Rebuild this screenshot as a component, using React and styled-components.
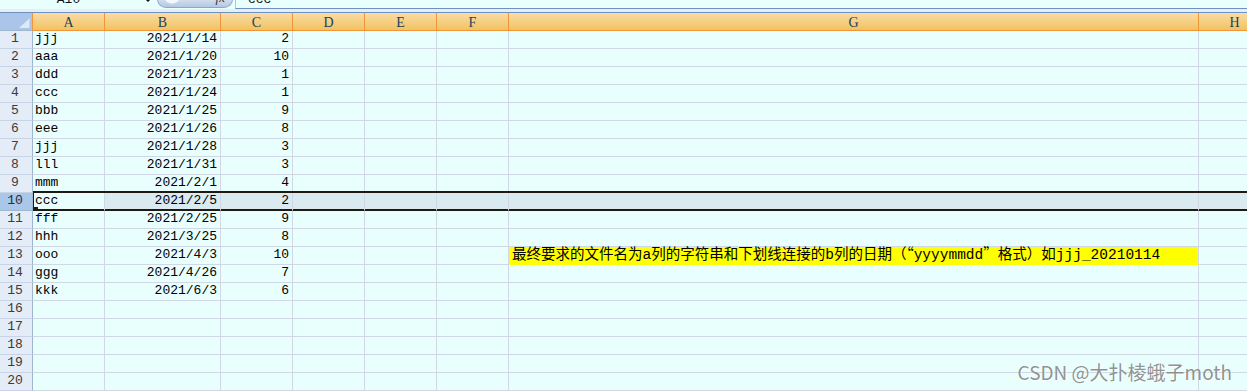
import React from "react";
import styled, { createGlobalStyle } from "styled-components";

const GlobalStyle = createGlobalStyle`
  html, body {
    margin: 0;
    padding: 0;
    background: #e8fffd;
  }
  body {
    font-family: "Liberation Mono", "Noto Sans CJK SC", monospace;
  }
`;

const COLUMNS = ["A", "B", "C", "D", "E", "F", "G", "H"];

const DATA = [
  ["jjj", "2021/1/14", "2"],
  ["aaa", "2021/1/20", "10"],
  ["ddd", "2021/1/23", "1"],
  ["ccc", "2021/1/24", "1"],
  ["bbb", "2021/1/25", "9"],
  ["eee", "2021/1/26", "8"],
  ["jjj", "2021/1/28", "3"],
  ["lll", "2021/1/31", "3"],
  ["mmm", "2021/2/1", "4"],
  ["ccc", "2021/2/5", "2"],
  ["fff", "2021/2/25", "9"],
  ["hhh", "2021/3/25", "8"],
  ["ooo", "2021/4/3", "10"],
  ["ggg", "2021/4/26", "7"],
  ["kkk", "2021/6/3", "6"],
  [],
  [],
  [],
  [],
  [],
];

const ACTIVE_ROW = 10;
const NOTE_ROW = 13;

const Page = styled.div`
  position: relative;
  width: 1247px;
  height: 391px;
  overflow: hidden;
  background: #e8fffd;
`;

const FormulaBar = styled.div`
  display: flex;
  height: 9px;
  overflow: hidden;
`;

const NameBox = styled.div`
  width: 137px;
  margin-top: -8px;
  text-align: center;
  font-size: 13px;
  line-height: 16px;
  color: #111;
`;

const DropArrow = styled.div`
  width: 0;
  height: 0;
  margin: -1px 0 0 8px;
  border-left: 3px solid transparent;
  border-right: 3px solid transparent;
  border-top: 3px solid #111;
`;

const FxButton = styled.div`
  display: flex;
  justify-content: flex-end;
  box-sizing: border-box;
  width: 76px;
  height: 9px;
  margin: -1px 0 0 6px;
  padding-right: 7px;
  border: 1px solid #8ea8cc;
  border-top: none;
  border-radius: 0 0 9px 9px;
  background: radial-gradient(circle at 14px -4px, #f4f7fb 0 8px, transparent 9px),
    linear-gradient(#d3e0f0, #b5c8e2);
`;

const FxLabel = styled.span`
  margin-top: -9px;
  font-family: "Liberation Serif", serif;
  font-style: italic;
  font-size: 13px;
  line-height: 16px;
  color: #333;
`;

const FormulaInput = styled.div`
  flex: 1;
  box-sizing: border-box;
  height: 9px;
  margin-left: 2px;
  padding-left: 12px;
  border-left: 1px solid #b6c4d6;
  border-bottom: 1px solid #6f91bf;
`;

const FormulaText = styled.div`
  margin-top: -8px;
  font-size: 13px;
  line-height: 16px;
  color: #111;
`;

const Strip = styled.div`
  height: 3px;
  background: #e6eef8;
  border-bottom: 1px solid #6f91bf;
`;

const Grid = styled.div`
  display: grid;
  grid-template-columns: 33px 72px 116px 72px 72px 72px 72px 690px 72px;
  grid-auto-rows: 18px;
`;

const Corner = styled.div`
  box-sizing: border-box;
  display: flex;
  justify-content: flex-end;
  align-items: flex-end;
  padding: 0 2px 2px 0;
  background: #aac5e9;
  border-right: 1px solid #f29536;
  border-bottom: 1px solid #9eb6ce;
`;

const ColHeader = styled.div`
  box-sizing: border-box;
  display: flex;
  align-items: center;
  justify-content: center;
  padding-top: 2px;
  background: linear-gradient(#f9dca6, #f1c25f);
  border-right: 1px solid #f29536;
  border-bottom: 1px solid #f29536;
  font-family: "Liberation Serif", serif;
  font-size: 14px;
  color: #243f5c;
`;

const RowHeader = styled.div`
  box-sizing: border-box;
  display: flex;
  align-items: flex-end;
  justify-content: center;
  padding: 0 2px 1px 0;
  background: ${(p) => (p.$active ? "#aac6e8" : "#e4ecf7")};
  border-right: 1px solid #9eb6ce;
  border-bottom: 1px solid ${(p) => (p.$active ? "#9eb6ce" : "#c7d4e6")};
  font-size: 13px;
  line-height: 16px;
  color: ${(p) => (p.$active ? "#1c2f45" : "#3b3b3b")};
`;

const Cell = styled.div`
  position: relative;
  box-sizing: border-box;
  display: flex;
  align-items: flex-end;
  justify-content: ${(p) => (p.$right ? "flex-end" : "flex-start")};
  padding: ${(p) => (p.$right ? "0 3px 1px 0" : "0 0 1px 2px")};
  white-space: nowrap;
  background: ${(p) =>
    p.$note ? "#ffff00" : p.$selected ? "#d9eaf1" : "#e8fffd"};
  border-right: 1px solid #d0d7e5;
  border-bottom: 1px solid
    ${(p) => (p.$active ? "#1f1912" : p.$note ? "#ffff00" : "#d0d7e5")};
  box-shadow: ${(p) =>
    p.$active
      ? `0 -2px 0 #1f1912, inset 0 -1px 0 #1f1912${
          p.$current ? ", inset 1px 0 0 #1f1912" : ""
        }`
      : "none"};
  font-size: 13px;
  line-height: 16px;
  color: #000;
`;

const NoteText = styled.span`
  font-family: "Liberation Mono", "Noto Sans CJK SC", monospace;
  font-size: 14.5px;
  line-height: 16px;
  margin-left: 1px;
`;

// full-width quotes, as the sheet's CJK font draws them
const WideQuote = styled.span`
  font-family: "Noto Sans CJK SC", sans-serif;
`;

const FillHandle = styled.span`
  position: absolute;
  left: 0;
  bottom: -2px;
  width: 5px;
  height: 5px;
  background: #1f1912;
`;

const Watermark = styled.div`
  position: absolute;
  right: 15px;
  bottom: 7px;
  font-family: "Noto Sans CJK SC", "Noto Sans", sans-serif;
  font-size: 19px;
  line-height: 24px;
  color: rgba(128, 128, 128, 0.85);
  text-shadow: 1px 1px 1px rgba(255, 255, 255, 0.9);
  white-space: nowrap;
`;

const CornerMark = () => (
  <svg width="11" height="10" viewBox="0 0 11 10">
    <polygon points="11,0 11,10 0,10" fill="#dfe9f6" />
    <polygon points="11,0 11,10 10,10 10,1" fill="#c4d5ec" />
  </svg>
);

const Note = () => (
  <NoteText>
    最终要求的文件名为a列的字符串和下划线连接的b列的日期（
    <WideQuote>“</WideQuote>yyyymmdd<WideQuote>”</WideQuote>
    格式）如jjj_20210114
  </NoteText>
);

const App = () => {
  return (
    <Page>
      <GlobalStyle />
      <FormulaBar>
        <NameBox>A10</NameBox>
        <DropArrow />
        <FxButton>
          <FxLabel>fx</FxLabel>
        </FxButton>
        <FormulaInput>
          <FormulaText>ccc</FormulaText>
        </FormulaInput>
      </FormulaBar>
      <Strip />
      <Grid>
        <Corner>
          <CornerMark />
        </Corner>
        {COLUMNS.map((c) => (
          <ColHeader key={c}>{c}</ColHeader>
        ))}
        {DATA.map((row, i) => {
          const n = i + 1;
          const active = n === ACTIVE_ROW;
          return (
            <React.Fragment key={n}>
              <RowHeader $active={active}>{n}</RowHeader>
              {COLUMNS.map((c, ci) => {
                const note = n === NOTE_ROW && c === "G";
                return (
                  <Cell
                    key={c}
                    $right={ci === 1 || ci === 2}
                    $active={active}
                    $current={active && ci === 0}
                    $selected={active && ci > 0}
                    $note={note}
                  >
                    {ci < 3 && row[ci]}
                    {note && <Note />}
                    {active && ci === 0 && <FillHandle />}
                  </Cell>
                );
              })}
            </React.Fragment>
          );
        })}
      </Grid>
      <Watermark>CSDN @大扑棱蛾子moth</Watermark>
    </Page>
  );
};

export default App;
